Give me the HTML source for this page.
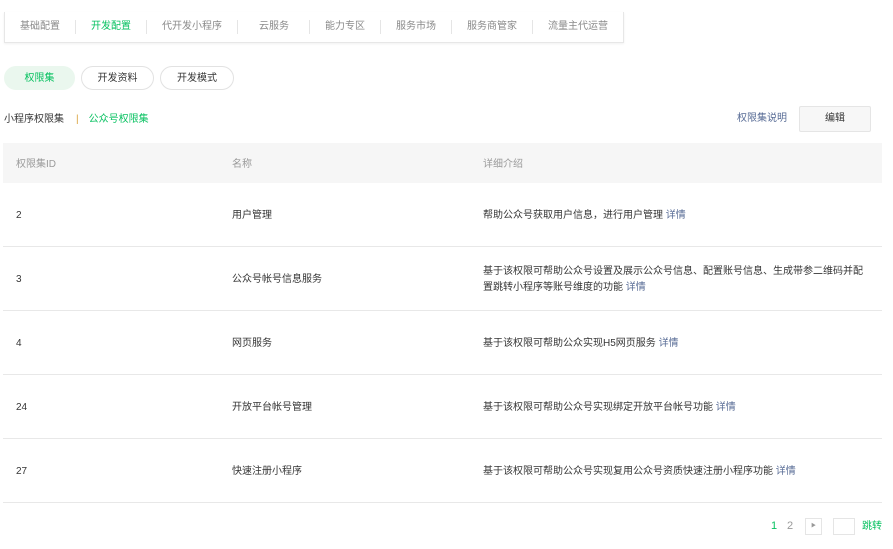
<!DOCTYPE html>
<html><head><meta charset="utf-8"><style>
*{margin:0;padding:0;box-sizing:border-box}
body{width:893px;height:549px;background:#fff;font-family:"Liberation Sans","Noto Sans CJK SC",sans-serif;font-size:10px;line-height:14px;color:#353535;position:relative;overflow:hidden}
.abs{position:absolute}
.tabs{left:4px;top:12px;width:620px;height:31px;border:1px solid #e7e7e7;border-top:none;box-shadow:0 1px 2px rgba(0,0,0,.06);display:flex;align-items:center;overflow:hidden}
.tabs span{color:#8a8a8a;padding:0 15px;border-right:1px solid #e5e5e5;line-height:14px;white-space:nowrap}
.tabs span:last-child{border-right:none}
.pill{top:66px;height:24px;border-radius:12px;border:1px solid #e2e2e2;line-height:23px;text-align:center;color:#353535}
.green{color:#07c160}
.hd{left:3px;top:143px;width:879px;height:40px;background:#f6f6f6;color:#9a9a9a}
.row{left:3px;width:879px;height:64px;border-bottom:1px solid #e8e8e8}
.c1,.c2,.c3{position:absolute;line-height:14px}
.c1{left:13px}.c2{left:229px}.c3{left:480px;width:388px;line-height:16px}
.link{color:#576b95}
</style></head><body>
<div class="abs tabs"><span>基础配置</span><span style="color:#07c160">开发配置</span><span>代开发小程序</span><span style="padding:0 20px 0 21px">云服务</span><span>能力专区</span><span>服务市场</span><span>服务商管家</span><span>流量主代运营</span></div>
<div class="abs pill" style="left:4px;width:71px;background:#eaf7ee;border-color:#eaf7ee;color:#07c160">权限集</div>
<div class="abs pill" style="left:81px;width:73px">开发资料</div>
<div class="abs pill" style="left:160px;width:74px">开发模式</div>
<div class="abs" style="left:4px;top:113px">小程序权限集<span style="color:#d9a23a;margin:0 10px 0 12px">|</span><span class="green">公众号权限集</span></div>
<div class="abs link" style="left:737px;top:112px">权限集说明</div>
<div class="abs" style="left:799px;top:106px;width:72px;height:26px;border:1px solid #e5e5e5;border-radius:2px;background:#f7f7f7;text-align:center;line-height:24px">编辑</div>
<div class="abs hd"><span class="c1" style="top:15px">权限集ID</span><span class="c2" style="top:15px">名称</span><span class="c3" style="top:14px">详细介绍</span></div>
<div class="abs row" style="top:183px"><span class="c1" style="top:26px">2</span><span class="c2" style="top:26px">用户管理</span><span class="c3" style="top:25px">帮助公众号获取用户信息，进行用户管理 <span class="link">详情</span></span></div>
<div class="abs row" style="top:247px"><span class="c1" style="top:26px">3</span><span class="c2" style="top:26px">公众号帐号信息服务</span><span class="c3" style="top:17px">基于该权限可帮助公众号设置及展示公众号信息、配置账号信息、生成带参二维码并配置跳转小程序等账号维度的功能 <span class="link">详情</span></span></div>
<div class="abs row" style="top:311px"><span class="c1" style="top:26px">4</span><span class="c2" style="top:26px">网页服务</span><span class="c3" style="top:25px">基于该权限可帮助公众实现H5网页服务 <span class="link">详情</span></span></div>
<div class="abs row" style="top:375px"><span class="c1" style="top:26px">24</span><span class="c2" style="top:26px">开放平台帐号管理</span><span class="c3" style="top:25px">基于该权限可帮助公众号实现绑定开放平台帐号功能 <span class="link">详情</span></span></div>
<div class="abs row" style="top:439px"><span class="c1" style="top:26px">27</span><span class="c2" style="top:26px">快速注册小程序</span><span class="c3" style="top:25px">基于该权限可帮助公众号实现复用公众号资质快速注册小程序功能 <span class="link">详情</span></span></div>
<div class="abs green" style="left:771px;top:519px;font-size:11px">1</div>
<div class="abs" style="left:787px;top:519px;font-size:11px;color:#999">2</div>
<div class="abs" style="left:805px;top:518px;width:17px;height:17px;border:1px solid #e5e5e5;color:#999;font-size:5px;text-align:center;line-height:15px">▶</div>
<div class="abs" style="left:833px;top:518px;width:22px;height:17px;border:1px solid #e5e5e5"></div>
<div class="abs green" style="left:862px;top:520px">跳转</div>
</body></html>
